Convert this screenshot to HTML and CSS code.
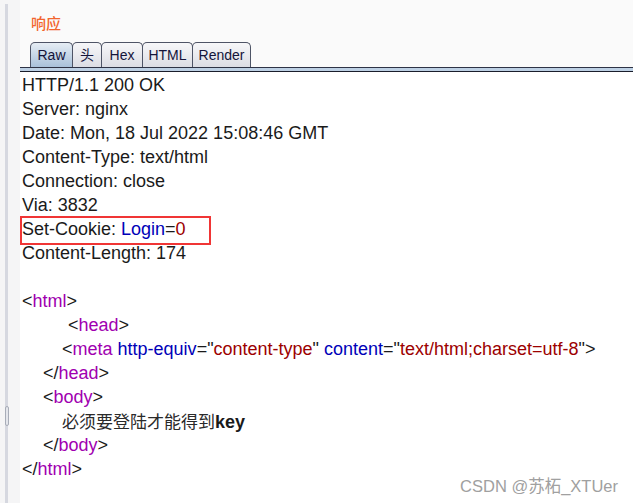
FILE: index.html
```html
<html>
	<head>
		<title>响应</title>
		<link rel="stylesheet" href="styles.css">
	</head>
	<body>
		<div class="frame">
			<div class="gutter">
				<div class="strip"></div>
				<div class="thumb"></div>
			</div>
			<div class="main">
				<div class="header">
					<div class="title">响应</div>
					<div class="tabs">
						<span class="tab raw selected">Raw</span>
						<span class="tab head">头</span>
						<span class="tab hex">Hex</span>
						<span class="tab html">HTML</span>
						<span class="tab render">Render</span>
					</div>
				</div>
				<div class="tabline"></div>
				<div class="body">
					<div class="line">HTTP/1.1 200 OK</div>
					<div class="line">Server: nginx</div>
					<div class="line">Date: Mon, 18 Jul 2022 15:08:46 GMT</div>
					<div class="line">Content-Type: text/html</div>
					<div class="line">Connection: close</div>
					<div class="line">Via: 3832</div>
					<div class="line marked">Set-Cookie: <span class="attr">Login</span>=<span class="val">0</span><span class="box"></span></div>
					<div class="line">Content-Length: 174</div>
					<div class="line">&nbsp;</div>
					<div class="line">&lt;<span class="tag">html</span>&gt;</div>
					<div class="line i3">&lt;<span class="tag">head</span>&gt;</div>
					<div class="line i2">&lt;<span class="tag">meta</span> <span class="attr">http-equiv</span>="<span class="val">content-type</span>" <span class="attr">content</span>="<span class="val">text/html;charset=utf-8</span>"&gt;</div>
					<div class="line i1">&lt;/<span class="tag">head</span>&gt;</div>
					<div class="line i1">&lt;<span class="tag">body</span>&gt;</div>
					<div class="line i2"><span class="cjk">必须要登陆才能得到</span><b>key</b></div>
					<div class="line i1">&lt;/<span class="tag">body</span>&gt;</div>
					<div class="line">&lt;/<span class="tag">html</span>&gt;</div>
				</div>
			</div>
		</div>
		<div class="watermark">CSDN @苏柘_XTUer</div>
	</body>
</html>
```

FILE: styles.css
```css
body {
	margin: 0;
	background-color: #fafafa;
	font-family: "Liberation Sans", Arial, "Noto Sans CJK SC", sans-serif;
	overflow: hidden;
}

.frame {
	display: flex;
	height: 503px;
}

.gutter {
	width: 20px;
	flex: none;
	background-color: #f5f5f6;
	position: relative;
}

.strip {
	margin: 4px 0 0 5px;
	width: 3px;
	height: 499px;
	background-color: #d6d8e0;
}

.thumb {
	position: absolute;
	left: 5px;
	top: 406px;
	width: 2px;
	height: 18px;
	border: 1px solid #a8adb8;
	border-radius: 2px;
	background-color: #e4e6ec;
}

.main {
	flex: 1;
	display: flex;
	flex-direction: column;
}

.header {
	padding: 0 0 0 10px;
}

.title {
	color: #f2652e;
	font-family: "Noto Sans CJK SC", sans-serif;
	font-size: 15px;
	font-weight: 500;
	line-height: 20px;
	padding: 13px 0 0 1px;
	height: 29px;
}

.tabs {
	display: flex;
	height: 25px;
}

.tab {
	box-sizing: border-box;
	height: 25px;
	margin-right: -1px;
	border: 1px solid #4e5466;
	border-bottom: none;
	border-radius: 5px 5px 0 0;
	background: linear-gradient(#f7f7f9, #dcdde4);
	color: #14143a;
	font-size: 14px;
	line-height: 25px;
	text-align: center;
}

.raw { width: 43px; }
.head { width: 30px; }
.hex { width: 42px; }
.html { width: 51px; }
.render { width: 59px; }

.tab.selected {
	background: linear-gradient(#e6edf4, #a9c1da);
}

.tabline {
	height: 3px;
	border-top: 1px solid #2e3345;
	border-bottom: 1px solid #1a1d2b;
	background-color: #bdd0e4;
}

.body {
	flex: 1;
	background-color: #fff;
	padding: 1px 0 0 2px;
	color: #1a1a1a;
	font-size: 18px;
}

.line {
	line-height: 24px;
	height: 24px;
	white-space: nowrap;
}

.i1 { padding-left: 21px; }
.i2 { padding-left: 40px; }
.i3 { padding-left: 46px; }

.tag {
	color: #a000b0;
}

.attr {
	color: #0000b8;
}

.val {
	color: #9c0000;
}

.cjk {
	font-family: "Noto Sans CJK SC", sans-serif;
	font-size: 17px;
	color: #2a2a2a;
}

.marked {
	position: relative;
}

.box {
	position: absolute;
	left: -2px;
	top: -1px;
	width: 187px;
	height: 25px;
	border: 2px solid #f03535;
}

.watermark {
	position: absolute;
	right: 15px;
	bottom: 6px;
	color: #a0a0a0;
	font-family: "Liberation Sans", Arial, "Noto Sans CJK SC", sans-serif;
	font-size: 16.5px;
}
```
